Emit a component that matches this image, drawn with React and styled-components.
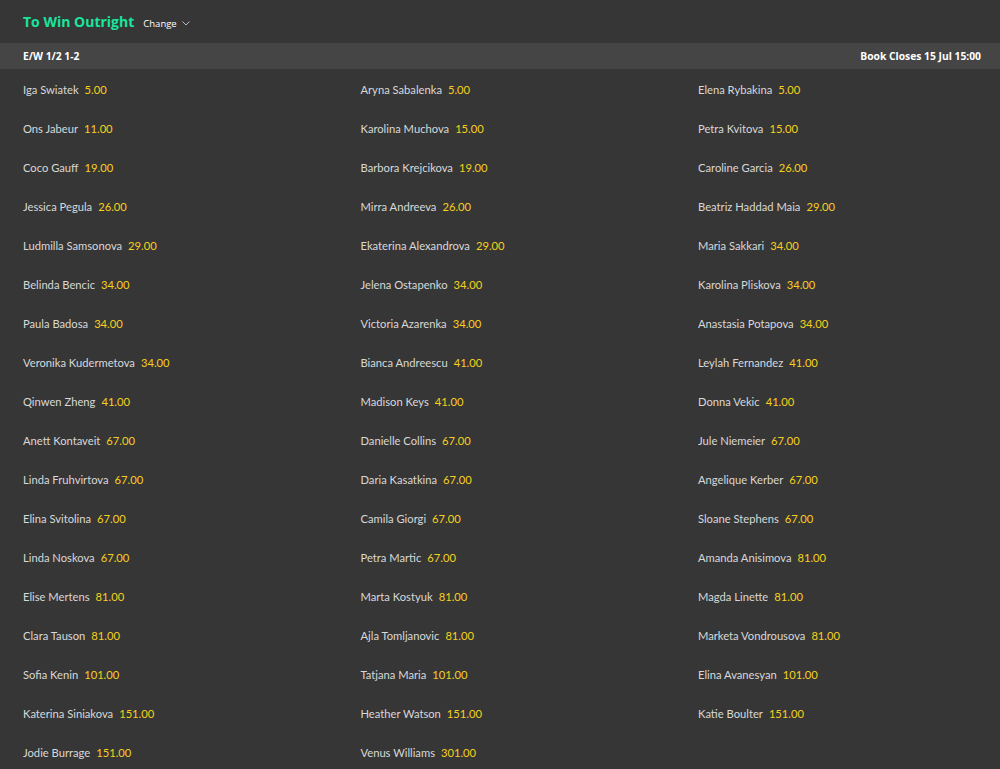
import styled, { createGlobalStyle } from 'styled-components';

const GlobalStyle = createGlobalStyle`
    html, body {
        margin: 0;
        padding: 0;
        background: #363636;
    }
    body {
        font-family: "Open Sans", "Noto Sans", "Liberation Sans", sans-serif;
    }
`;

const Page = styled.div`
    width: 1000px;
    min-height: 769px;
    background: #363636;
`;

const Header = styled.div`
    display: flex;
    align-items: center;
    height: 43px;
    padding: 0 23px;
    gap: 9px;
`;

const Title = styled.h1`
    margin: 0;
    font-size: 14px;
    font-weight: 700;
    color: #1ae49d;
`;

const ChangeBtn = styled.button`
    display: flex;
    align-items: center;
    gap: 5px;
    padding: 0;
    margin-top: 3px;
    border: none;
    background: none;
    color: #ffffff;
    font-family: inherit;
    font-size: 9.5px;
    cursor: pointer;
`;

const InfoBar = styled.div`
    display: flex;
    justify-content: space-between;
    align-items: center;
    height: 26px;
    padding: 0 19px 0 23px;
    background: #454545;
    color: #ffffff;
    font-size: 10.3px;
    font-weight: 700;
`;

const Grid = styled.div`
    display: grid;
    grid-template-columns: repeat(3, 337.5px);
    padding: 1px 23px 0;
    grid-auto-rows: 39px;
`;

const Cell = styled.div`
    display: flex;
    align-items: center;
    gap: 6px;
    font-family: "Lato", "Open Sans", sans-serif;
    font-size: 11.2px;
`;

const Name = styled.span`
    color: #d8d8d8;
`;

const Odds = styled.span`
    color: #f7d01d;
`;

const cols = [
    [
        ['Iga Swiatek', '5.00'],
        ['Ons Jabeur', '11.00'],
        ['Coco Gauff', '19.00'],
        ['Jessica Pegula', '26.00'],
        ['Ludmilla Samsonova', '29.00'],
        ['Belinda Bencic', '34.00'],
        ['Paula Badosa', '34.00'],
        ['Veronika Kudermetova', '34.00'],
        ['Qinwen Zheng', '41.00'],
        ['Anett Kontaveit', '67.00'],
        ['Linda Fruhvirtova', '67.00'],
        ['Elina Svitolina', '67.00'],
        ['Linda Noskova', '67.00'],
        ['Elise Mertens', '81.00'],
        ['Clara Tauson', '81.00'],
        ['Sofia Kenin', '101.00'],
        ['Katerina Siniakova', '151.00'],
        ['Jodie Burrage', '151.00'],
    ],
    [
        ['Aryna Sabalenka', '5.00'],
        ['Karolina Muchova', '15.00'],
        ['Barbora Krejcikova', '19.00'],
        ['Mirra Andreeva', '26.00'],
        ['Ekaterina Alexandrova', '29.00'],
        ['Jelena Ostapenko', '34.00'],
        ['Victoria Azarenka', '34.00'],
        ['Bianca Andreescu', '41.00'],
        ['Madison Keys', '41.00'],
        ['Danielle Collins', '67.00'],
        ['Daria Kasatkina', '67.00'],
        ['Camila Giorgi', '67.00'],
        ['Petra Martic', '67.00'],
        ['Marta Kostyuk', '81.00'],
        ['Ajla Tomljanovic', '81.00'],
        ['Tatjana Maria', '101.00'],
        ['Heather Watson', '151.00'],
        ['Venus Williams', '301.00'],
    ],
    [
        ['Elena Rybakina', '5.00'],
        ['Petra Kvitova', '15.00'],
        ['Caroline Garcia', '26.00'],
        ['Beatriz Haddad Maia', '29.00'],
        ['Maria Sakkari', '34.00'],
        ['Karolina Pliskova', '34.00'],
        ['Anastasia Potapova', '34.00'],
        ['Leylah Fernandez', '41.00'],
        ['Donna Vekic', '41.00'],
        ['Jule Niemeier', '67.00'],
        ['Angelique Kerber', '67.00'],
        ['Sloane Stephens', '67.00'],
        ['Amanda Anisimova', '81.00'],
        ['Magda Linette', '81.00'],
        ['Marketa Vondrousova', '81.00'],
        ['Elina Avanesyan', '101.00'],
        ['Katie Boulter', '151.00'],
    ],
];

const rows = [];
for (let r = 0; r < 18; r++) {
    for (let c = 0; c < 3; c++) {
        rows.push(cols[c][r] || null);
    }
}

export default function App() {
    return (
        <>
            <GlobalStyle />
            <Page>
                <Header>
                    <Title>To Win Outright</Title>
                    <ChangeBtn>
                        Change
                        <svg width="8" height="5" viewBox="0 0 8 5" fill="none">
                            <path d="M0.5 0.5 L4 4 L7.5 0.5" stroke="#bbbbbb" strokeWidth="1" />
                        </svg>
                    </ChangeBtn>
                </Header>
                <InfoBar>
                    <span>E/W 1/2 1-2</span>
                    <span>Book Closes 15 Jul 15:00</span>
                </InfoBar>
                <Grid>
                    {rows.map((item, i) =>
                        item ? (
                            <Cell key={i}>
                                <Name>{item[0]}</Name>
                                <Odds>{item[1]}</Odds>
                            </Cell>
                        ) : (
                            <Cell key={i} />
                        )
                    )}
                </Grid>
            </Page>
        </>
    );
}
